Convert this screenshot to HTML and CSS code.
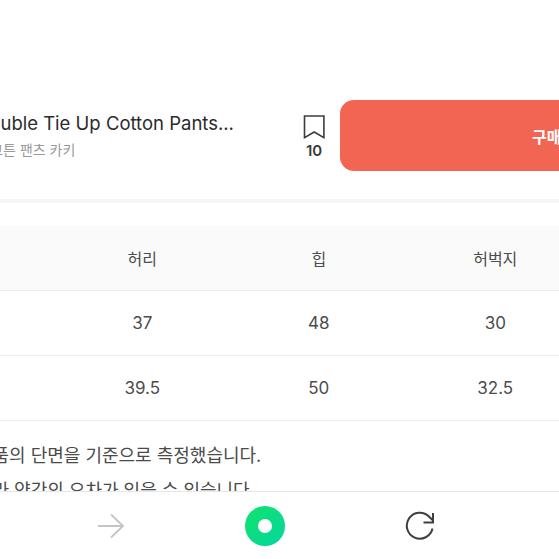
FILE: index.html
```html
<!DOCTYPE html>
<html lang="ko">
<head>
<meta charset="utf-8">
<title>사이즈</title>
<link rel="stylesheet" href="styles.css">
</head>
<body>
<div class="page">
  <main class="main">
    <div class="buybar">
      <div class="info">
        <div class="title">Double Tie Up Cotton Pants...</div>
        <div class="sub">더블 타이 업 코튼 팬츠 카키</div>
      </div>
      <div class="save">
        <svg class="bookmark" width="22" height="24" viewBox="0 0 22 24"><path d="M1.5 1h19.4v21.6L11.2 17 1.5 22.6z" fill="none" stroke="#3c3c3c" stroke-width="1.6"/></svg>
        <span class="count">10</span>
      </div>
      <div class="buy"><span class="buy-label">구매하기</span></div>
    </div>
    <div class="divider"></div>
    <div class="size-table">
      <div class="row head"><div></div><div>허리</div><div>힙</div><div>허벅지</div></div>
      <div class="row"><div></div><div>37</div><div>48</div><div>30</div></div>
      <div class="row"><div></div><div>39.5</div><div>50</div><div>32.5</div></div>
    </div>
    <p class="note">이 사이즈는 상품의 단면을 기준으로 측정했습니다.</p>
    <p class="note second">측정 방법에 따라 약간의 오차가 있을 수 있습니다.</p>
  </main>
  <nav class="nav">
    <svg class="nav-arrow" width="28" height="28" viewBox="0 0 28 28"><path d="M1 14h24M14 2.500l12 11.500-12 11.500" fill="none" stroke="#c4c4c4" stroke-width="1.800"/></svg>
    <div class="nav-home"><span class="nav-dot"></span></div>
    <svg class="nav-reload" width="30" height="30" viewBox="0 0 30 30"><path d="M27.500 17.500A13 13 0 1 1 24 5.500L28 9.500M18.500 11.500h9.500V2" fill="none" stroke="#3f3f3f" stroke-width="2"/></svg>
  </nav>
</div>
</body>
</html>
```
FILE: styles.css
```css
* { box-sizing: border-box; }
html, body { margin: 0; padding: 0; background: #fff; }
body { font-family: Inter, "Noto Sans CJK KR", sans-serif; }
.page { width: 559px; height: 559px; overflow: hidden; display: flex; flex-direction: column; }
.main { height: 491px; overflow: hidden; padding-top: 100px; flex: none; }
.buybar { display: flex; align-items: flex-start; margin-left: -24px; height: 99px; width: 800px; }
.info { width: 312px; padding-top: 11px; flex: none; }
.title { font-size: 18.500px; line-height: 24px; color: #2b2b2b; white-space: nowrap; }
.sub { font-size: 14px; line-height: 20px; margin-top: 5px; color: #9a9a9a; white-space: nowrap; margin-left: -62px; }
.save { width: 52px; flex: none; display: flex; flex-direction: column; align-items: center; padding-top: 15px; }
.bookmark { display: block; }
.count { font-size: 15px; line-height: 18px; font-weight: 600; color: #3a3a3a; margin-top: 3px; }
.buy { width: 420px; height: 71px; background: #f26552; border-radius: 14px; flex: none; display: flex; align-items: center; padding-left: 192px; }
.buy-label { color: #fff; font-size: 16px; font-weight: 700; white-space: nowrap; }
.divider { height: 4px; background: #f6f6f6; }
.size-table { margin-top: 23px; margin-left: -35px; width: 720px; }
.row { display: grid; grid-template-columns: 89px 176.500px 176.500px 176.500px 101px; height: 65px; border-bottom: 1px solid #ececec; align-items: center; text-align: center; font-size: 17px; color: #4c4c4c; }
.head { background: #fafafa; font-size: 16px; }
.note { margin: 23px 0 0 -117px; font-size: 18px; line-height: 24px; color: #4a4a4a; white-space: nowrap; }
.second { margin-top: 11px; margin-left: -117px; }
.nav { flex: 1; background: #fff; border-top: 1px solid #e6e6e6; position: relative; display: flex; align-items: center; padding: 0 124px 0 97px; justify-content: space-between; }
.nav-home { width: 40px; height: 40px; border-radius: 50%; background: linear-gradient(135deg, #0fe36a, #05d6a0); display: flex; align-items: center; justify-content: center; }
.nav-dot { width: 14px; height: 14px; background: #fff; border-radius: 50%; }
```
